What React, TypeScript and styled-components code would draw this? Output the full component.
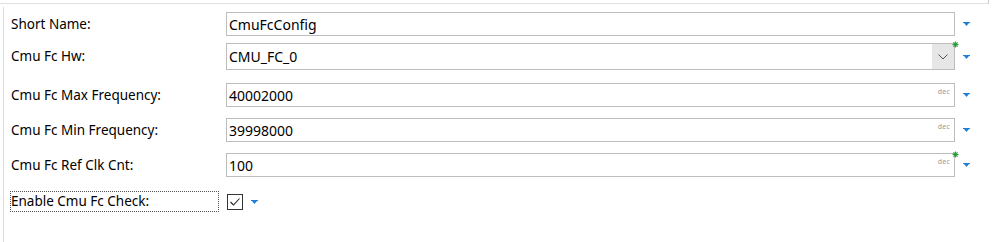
import styled, { createGlobalStyle } from "styled-components";

const Global = createGlobalStyle`
    html, body {
        margin: 0;
        padding: 0;
        background: #ffffff;
    }
    body {
        font-family: "Segoe UI", "Noto Sans", "Open Sans", sans-serif;
        color: #000000;
    }
`;

const Page = styled.div`
    width: 999px;
    height: 242px;
    overflow: hidden;
    background: #ffffff;
    display: flex;
    flex-direction: column;
`;

const TopStrip = styled.div`
    width: 988px;
    height: 3px;
    border-bottom: 1px solid #e1e1e1;
    border-right: 1px solid #c9c9c9;
    flex-shrink: 0;
`;

const Body = styled.div`
    flex: 1;
    margin-top: 3px;
    margin-left: 3px;
    border-left: 1px solid #dadada;
    display: flex;
    flex-direction: column;
    padding-left: 6px;
`;

const Row = styled.div<{ $top: number; $h: number }>`
    display: flex;
    align-items: center;
    margin-top: ${(p) => p.$top}px;
    height: ${(p) => p.$h}px;
`;

const Label = styled.div<{ $focused?: boolean }>`
    width: 216px;
    box-sizing: border-box;
    font-size: 13.5px;
    line-height: 19px;
    padding-left: 1px;
    white-space: nowrap;
    ${(p) =>
        p.$focused
            ? `
        height: 21px;
        border: 1px dotted #555555;
        padding-left: 0px;
        width: 209px;
        margin-right: 7px;
    `
            : ""}
`;

const Field = styled.div`
    position: relative;
    width: 729px;
    height: 100%;
    box-sizing: border-box;
    border: 1px solid #bdbdbd;
    display: flex;
    align-items: center;
    padding-left: 2px;
    font-size: 14px;
`;

const FieldText = styled.span`
    flex: 1;
    white-space: nowrap;
`;

const Unit = styled.span`
    font-size: 7px;
    color: #9a9a9a;
    align-self: flex-start;
    margin-top: 3px;
    margin-right: 4px;
    letter-spacing: 0.2px;
`;

const DropButton = styled.div`
    width: 22px;
    height: 100%;
    background: #e6e6e6;
    display: flex;
    align-items: center;
    justify-content: center;
`;

const Star = styled.svg`
    position: absolute;
    right: -5px;
    top: -3px;
`;

const Menu = styled.svg`
    margin-left: 8px;
    flex-shrink: 0;
`;

const Check = styled.div`
    width: 16px;
    height: 16px;
    box-sizing: border-box;
    border: 1px solid #333333;
    display: flex;
    align-items: center;
    justify-content: center;
    margin-left: 1px;
`;

const MenuArrow = () => (
    <Menu width="7" height="4" viewBox="0 0 7 4">
        <rect x="0" y="0" width="7" height="1" fill="#1e7fd8" />
        <polygon points="1,1 6,1 3.5,4" fill="#1e7fd8" />
    </Menu>
);

const GreenStar = () => (
    <Star width="7" height="7" viewBox="0 0 7 7">
        <g stroke="#2e9e3e" strokeWidth="1.2">
            <line x1="3.5" y1="0.5" x2="3.5" y2="6.5" />
            <line x1="0.5" y1="3.5" x2="6.5" y2="3.5" />
            <line x1="1.4" y1="1.4" x2="5.6" y2="5.6" />
            <line x1="5.6" y1="1.4" x2="1.4" y2="5.6" />
        </g>
    </Star>
);

type Item = {
    label: string;
    value: string;
    top: number;
    h: number;
    combo?: boolean;
    unit?: boolean;
    star?: boolean;
};

const items: Item[] = [
    { label: "Short Name:", value: "CmuFcConfig", top: 5, h: 24 },
    { label: "Cmu Fc Hw:", value: "CMU_FC_0", top: 7, h: 27, combo: true, star: true },
    { label: "Cmu Fc Max Frequency:", value: "40002000", top: 13, h: 24, unit: true },
    { label: "Cmu Fc Min Frequency:", value: "39998000", top: 11, h: 24, unit: true },
    { label: "Cmu Fc Ref Clk Cnt:", value: "100", top: 11, h: 24, unit: true, star: true },
];

export default function App() {
    return (
        <Page>
            <Global />
            <TopStrip />
            <Body>
                {items.map((it) => (
                    <Row key={it.label} $top={it.top} $h={it.h}>
                        <Label>{it.label}</Label>
                        <Field>
                            <FieldText>{it.value}</FieldText>
                            {it.unit ? <Unit>dec</Unit> : null}
                            {it.combo ? (
                                <DropButton>
                                    <svg width="10" height="6" viewBox="0 0 10 6">
                                        <polyline points="0.5,0.5 5,5 9.5,0.5" fill="none" stroke="#555555" strokeWidth="1" />
                                    </svg>
                                </DropButton>
                            ) : null}
                            {it.star ? <GreenStar /> : null}
                        </Field>
                        <MenuArrow />
                    </Row>
                ))}
                <Row $top={14} $h={21}>
                    <Label $focused>Enable Cmu Fc Check:</Label>
                    <Check>
                        <svg width="12" height="10" viewBox="0 0 12 10">
                            <polyline points="1.5,5 4.5,8 10.5,1.5" fill="none" stroke="#222222" strokeWidth="1.1" />
                        </svg>
                    </Check>
                    <MenuArrow />
                </Row>
            </Body>
        </Page>
    );
}
